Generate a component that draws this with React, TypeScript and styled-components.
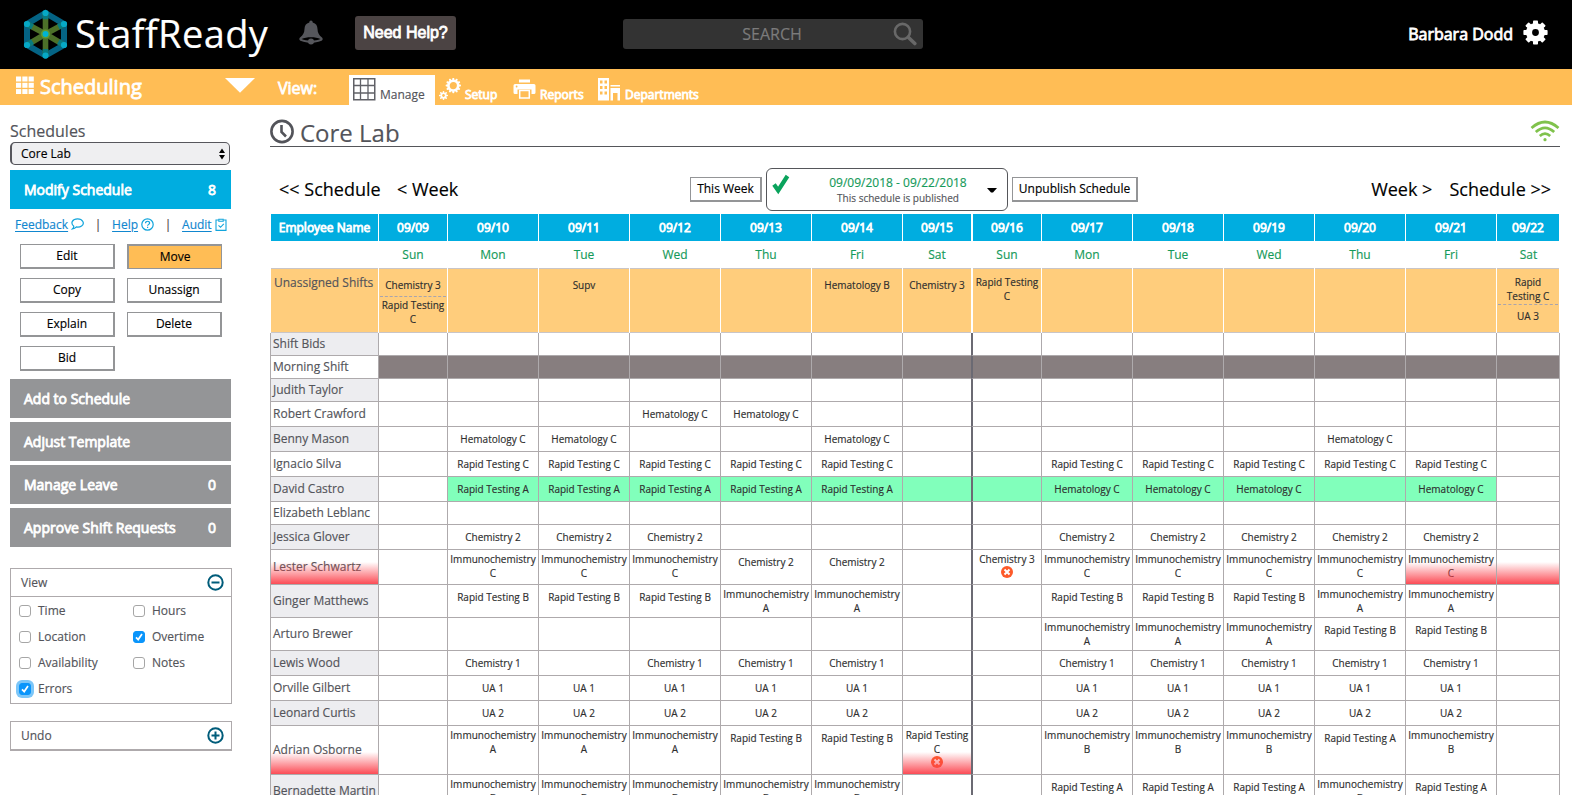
import React from 'react';
import styled, { createGlobalStyle, css } from 'styled-components';

const color = {
  orange: '#ffbd55',
  blue: '#00ade0',
  grey: '#949597',
  ink: '#53545a',
  line: '#aeaaac',
  green: '#159a5a',
};

const GlobalStyle = createGlobalStyle`
  * { box-sizing: border-box; }
  html, body { margin: 0; height: 795px; overflow: hidden; background: #fff; }
  body {
    font-family: 'Open Sans', sans-serif;
    font-size: 12px;
    color: ${color.ink};
    -webkit-text-stroke: 0.15px;
  }
  svg { display: block; flex: none; }
`;

const heavy = css`
  -webkit-text-stroke: 0.8px currentColor;
`;

/* ---------- Page frame ---------- */

const Page = styled.div`
  width: 1572px;
  height: 795px;
  overflow: hidden;
  display: flex;
  flex-direction: column;
`;

const TopBar = styled.header`
  flex: none;
  height: 69px;
  background: #000;
  display: flex;
  align-items: flex-start;
  color: #fff;
`;

const Logo = styled.div`
  display: flex;
  width: 277px;
  margin: 7px 0 0 22px;
  height: 54px;
`;

const LogoText = styled.span`
  margin-left: 5px;
  font-size: 38px;
  line-height: 53px;
  letter-spacing: 0.4px;
`;

const BellBox = styled.div`
  width: 56px;
  margin-top: 20px;
`;

const HelpButton = styled.div`
  ${heavy}
  width: 101px;
  height: 34px;
  margin-top: 16px;
  border-radius: 3px;
  background: #4b4343;
  font: 16px/33px 'Liberation Sans', sans-serif;
  text-align: center;
`;

const SearchBox = styled.div`
  width: 300px;
  height: 30px;
  margin: 19px 0 0 167px;
  padding: 3px 5px 0 28px;
  border-radius: 3px;
  background: #333;
  color: #7b7b7b;
  display: flex;
`;

const SearchLabel = styled.span`
  flex: 1;
  text-align: center;
  font-size: 16px;
  line-height: 24px;
`;

const Account = styled.div`
  ${heavy}
  margin: 20px 24px 0 auto;
  display: flex;
  gap: 10px;
  font-size: 16px;
  line-height: 28px;
`;

const NavBar = styled.nav`
  flex: none;
  height: 36px;
  background: ${color.orange};
  color: #fff;
  display: flex;
`;

const ModuleName = styled.div`
  ${heavy}
  width: 210px;
  padding: 7px 0 0 16px;
  display: flex;
  gap: 6px;
  font-size: 20px;
  line-height: 22px;
`;

const ModuleArrow = styled.div`
  width: 67px;
  padding: 9px 0 0 15px;
`;

const ViewLabel = styled.div`
  ${heavy}
  width: 72px;
  padding-left: 1px;
  font-size: 16px;
  line-height: 38px;
`;

const Tab = styled.div<{ $active?: boolean; $width: number }>`
  width: ${p => p.$width}px;
  height: 30px;
  margin-top: 6px;
  padding: 3px 0 0 4px;
  display: flex;
  gap: 4px;
  line-height: 33px;
  ${p => (p.$active ? css`background: #fff; color: ${color.ink};` : heavy)}
`;

const Body = styled.div`
  display: flex;
  align-items: flex-start;
`;

/* ---------- Sidebar ---------- */

const Sidebar = styled.aside`
  flex: none;
  width: 270px;
  padding: 15px 0 0 10px;
`;

const FieldLabel = styled.div`
  height: 22px;
  font-size: 16px;
  line-height: 22px;
`;

const Select = styled.div`
  width: 220px;
  height: 23px;
  padding: 0 3px 0 9px;
  border: 1px solid #56565c;
  border-left-width: 2px;
  border-radius: 5px;
  background: #efeff1;
  color: #000;
  line-height: 21px;
  display: flex;
  justify-content: space-between;
  align-items: center;
`;

const SectionButton = styled.div<{ $active?: boolean }>`
  ${heavy}
  width: 221px;
  height: 39px;
  margin-top: ${p => (p.$active ? 5 : 4)}px;
  padding: 0 15px 0 14px;
  background: ${p => (p.$active ? color.blue : color.grey)};
  color: #fff;
  font-size: 14px;
  line-height: 39px;
  display: flex;
  justify-content: space-between;
`;

const LinkRow = styled.div`
  display: flex;
  align-items: center;
  width: 221px;
  height: 18px;
  margin-top: 7px;
  padding-left: 5px;
  line-height: 18px;
`;

const Link = styled.a`
  display: flex;
  align-items: center;
  gap: 3px;
  color: #1187cf;
  span { text-decoration: underline; text-underline-offset: 2px; }
  svg { margin-top: -2px; }
`;

const Pipe = styled.span`
  width: 28px;
  text-align: center;
  color: #4b4643;
`;

const ButtonGrid = styled.div`
  display: grid;
  grid-template-columns: 95px 95px;
  grid-auto-rows: 25px;
  gap: 9px 12px;
  margin: 10px 0 8px 10px;
`;

const Button = styled.div<{ $pressed?: boolean }>`
  height: 25px;
  border: solid ${color.grey};
  border-width: ${p => (p.$pressed ? '2px 1px 1px 2px' : '1px 2px 2px 1px')};
  background: ${p => (p.$pressed ? color.orange : '#fff')};
  color: #000;
  line-height: 22px;
  text-align: center;
`;

const Panel = styled.section<{ $top: number }>`
  width: 222px;
  margin-top: ${p => p.$top}px;
  border: 1px solid ${color.line};
`;

const PanelHeader = styled.div`
  height: 28px;
  padding: 0 7px 0 10px;
  border-bottom: 1px solid ${color.line};
  line-height: 26px;
  display: flex;
  justify-content: space-between;
  align-items: center;
`;

const Options = styled.div`
  display: grid;
  grid-template-columns: 114px 1fr;
  grid-auto-rows: 26px;
  padding: 0 0 2px 8px;
`;

const Option = styled.label`
  display: flex;
  align-items: center;
  gap: 7px;
`;

const Check = styled.span<{ $on?: boolean; $focus?: boolean }>`
  width: 12px;
  height: 12px;
  margin-top: 2px;
  border: 1px solid ${p => (p.$on ? '#0a95fb' : '#a6a6a6')};
  border-radius: 3px;
  background: ${p => (p.$on ? '#0a95fb' : '#fff')};
  ${p => p.$focus && css`box-shadow: 0 0 0 3px #7cc6f8;`}
`;

/* ---------- Main area ---------- */

const Main = styled.main`
  width: 1290px;
`;

const TitleRow = styled.div`
  height: 42px;
  padding-top: 14px;
  border-bottom: 1px solid #55565a;
  display: flex;
  font-size: 24px;
  line-height: 28px;
`;

const Title = styled.span`
  flex: 1;
  padding-left: 6px;
`;

const WeekBar = styled.div`
  height: 67px;
  padding: 21px 9px 0;
  display: flex;
  color: #000;
`;

const WeekLink = styled.span<{ $width?: number }>`
  width: ${p => (p.$width ? p.$width + 'px' : 'auto')};
  font-size: 18px;
  line-height: 43px;
  white-space: nowrap;
`;

const NextLinks = styled.div`
  margin-left: auto;
  display: flex;
  gap: 17px;
`;

const WeekButton = styled(Button)<{ $width: number }>`
  width: ${p => p.$width}px;
  margin-top: 9px;
`;

const Period = styled.div`
  width: 242px;
  height: 43px;
  margin: 0 4px;
  padding: 5px 10px 0 5px;
  border: 1px solid #55565a;
  border-radius: 6px;
  display: flex;
`;

const PeriodText = styled.div`
  flex: 1;
  padding-left: 19px;
  color: ${color.ink};
  text-align: center;
  font-size: 10px;
  line-height: 14px;
`;

const PeriodDates = styled.div`
  color: ${color.green};
  font-size: 12px;
  line-height: 17px;
`;

/* ---------- Schedule grid ---------- */

const Table = styled.div`
  width: 1290px;
`;

const Row = styled.div<{ $height: number }>`
  display: grid;
  grid-template-columns: 108px 69px repeat(5, 91px) 69px 70px repeat(5, 91px) 64px;
  height: ${p => p.$height}px;
`;

const HeadCell = styled.div<{ $first?: boolean; $split?: boolean; $last?: boolean }>`
  ${heavy}
  border-left: ${p => (p.$split ? 2 : 1)}px solid #fff;
  border-right: ${p => (p.$last ? 1 : 0)}px solid #fff;
  background: ${color.blue};
  color: #fff;
  line-height: 27px;
  text-align: center;
`;

const DayCell = styled.div<{ $split?: boolean }>`
  padding-left: ${p => (p.$split ? 2 : 1)}px;
  color: ${color.green};
  line-height: 27px;
  text-align: center;
`;

const OpenCell = styled.div<{ $split?: boolean; $last?: boolean }>`
  margin-left: ${p => (p.$split ? 2 : 1)}px;
  margin-right: ${p => (p.$last ? 1 : 0)}px;
  padding: 5px 1px 0;
  border: solid #c9c5c7;
  border-width: 1px 0;
  background: #ffcd7c;
`;

const OpenName = styled.div`
  padding-left: 2px;
  line-height: 17px;
  white-space: nowrap;
`;

const overtime = css`
  position: relative;
  &::after {
    content: '';
    position: absolute;
    inset: auto 0 0 0;
    height: 22px;
    background: linear-gradient(rgba(251, 66, 76, 0), rgba(251, 66, 76, 0.95));
  }
`;

const Cell = styled.div<{ $split?: boolean; $last?: boolean; $fill?: string; $ot?: boolean }>`
  padding: 1px 1px 0;
  border-left: ${p => (p.$split ? '2px solid #6b6a73' : `1px solid ${color.line}`)};
  border-right: ${p => (p.$last ? 1 : 0)}px solid ${color.line};
  border-bottom: 1px solid ${color.line};
  background: ${p => p.$fill ?? '#fff'};
  background-clip: padding-box;
  ${p => p.$ot && overtime}
`;

const NameCell = styled.div<{ $shade: boolean; $ot?: boolean }>`
  padding: 0 0 1px 2px;
  border: solid ${color.line};
  border-width: 0 0 1px 1px;
  background: ${p => (p.$shade ? '#ededf0' : '#fff')};
  display: flex;
  align-items: center;
  line-height: 16px;
  white-space: nowrap;
  ${p => p.$ot && overtime}
`;

const Shift = styled.div<{ $next?: boolean }>`
  min-height: 22px;
  padding: 1px 0;
  color: #2e2e2e;
  font-size: 10px;
  line-height: 14px;
  text-align: center;
  display: flex;
  flex-direction: column;
  align-items: center;
  justify-content: center;
  ${p => p.$next && css`border-top: 1px dashed #a8a4ae; min-height: 23px;`}
`;

/* ---------- Icons ---------- */

const LogoMark = () => {
  const pts: [number, number][] = [[23.5, 6], [42, 17], [42, 38], [23.5, 48.5], [5, 38], [5, 17]];
  return (
    <svg width="48" height="54" viewBox="0 0 48 54">
      <polygon points={pts.map(p => p.join(',')).join(' ')} fill="none" stroke="#046384" strokeWidth="6" />
      {pts.map(([x, y], i) => (
        <line key={i} x1="23.5" y1="27" x2={x} y2={y} stroke="#4c7029" strokeWidth="5.6" />
      ))}
      {pts.map(([x, y], i) => (
        <line key={i} x1={x + (23.5 - x) * 0.3} y1={y + (27 - y) * 0.3} x2={x} y2={y} stroke="#087a80" strokeWidth="5.6" />
      ))}
      {pts.map(([x, y], i) => <circle key={i} cx={x} cy={y} r="3.1" fill="#06a9c6" />)}
      <circle cx="23.5" cy="27" r="4.6" fill="#5f9a2e" />
      <circle cx="23.5" cy="27" r="3" fill="#00b4d2" />
    </svg>
  );
};

const BellIcon = () => (
  <svg width="24" height="25" viewBox="0 0 24 25">
    <path d="M12 0.5c-1 0-1.7.8-1.7 1.9C7 3.2 5.6 5.6 5.5 9c-.1 4-1.6 6.200-4.200 8.200C-.4 18.600.3 20.300 2.200 21c6 2.400 13.600 2.400 19.600 0 1.900-.7 2.600-2.400.9-3.800-2.600-2-4.100-4.200-4.200-8.200-.1-3.400-1.500-5.800-4.800-6.600C13.700 1.300 13 .5 12 .5z" fill="#56575c" />
    <path d="M2.500 18.900c5-2.200 14-2.200 19 0-5 2.100-14 2.100-19 0z" fill="#000" />
    <circle cx="12" cy="21.500" r="3" fill="#56575c" />
  </svg>
);

const SearchIcon = () => (
  <svg width="25" height="24" viewBox="0 0 25 24" fill="none" stroke="#686868">
    <circle cx="9.500" cy="9.500" r="7.600" strokeWidth="2.600" />
    <path d="M15.500 15.500l6.300 6" strokeWidth="3.600" strokeLinecap="round" />
  </svg>
);

const Gear = ({ cx, cy, r, hole, teeth, fill = '#fff', depth, tooth }: {
  cx: number; cy: number; r: number; hole: number; teeth: number; fill?: string; depth: number; tooth: number;
}) => (
  <g>
    {Array.from({ length: teeth }, (_, i) => (
      <rect key={i} x={cx - tooth / 2} y={cy - r - depth} width={tooth} height={depth + 1.5} rx="0.8" fill={fill}
        transform={`rotate(${(360 / teeth) * i} ${cx} ${cy})`} />
    ))}
    <circle cx={cx} cy={cy} r={(r + hole) / 2} fill="none" stroke={fill} strokeWidth={r - hole} />
  </g>
);

const AppsIcon = () => (
  <svg width="18" height="18" viewBox="0 0 18 18" fill="#fff">
    {[0, 6.3, 12.6].map(y => [0, 6.3, 12.6].map(x => (
      <rect key={`${x}-${y}`} x={x} y={y + 0.5} width="5.2" height="5" />
    )))}
  </svg>
);

const TableIcon = () => (
  <svg width="23" height="23" viewBox="0 0 23 23" fill="none" stroke="#606167">
    <rect x="0.75" y="0.75" width="21" height="21" strokeWidth="1.5" />
    <path d="M7.500 1v21M15 1v21M1 7.500h21M1 15h21" strokeWidth="1.300" />
  </svg>
);

const SetupIcon = () => (
  <svg width="22" height="23" viewBox="0 0 22 23">
    <Gear cx={14.3} cy={7.6} r={6.2} hole={3.6} teeth={12} depth={1.5} tooth={2} />
    <Gear cx={4.5} cy={17.5} r={3.1} hole={1.4} teeth={8} depth={1.5} tooth={1.6} />
  </svg>
);

const PrinterIcon = () => (
  <svg width="23" height="23" viewBox="0 0 23 23" fill="#fff">
    <rect x="6" y="1.500" width="11" height="3" />
    <path d="M2 6h19a1.500 1.500 0 0 1 1.500 1.500v7a1.500 1.500 0 0 1-1.500 1.500h-2.500V11.500h-14V16H2A1.500 1.500 0 0 1 .5 14.500V7.500A1.500 1.500 0 0 1 2 6z" />
    <circle cx="3.600" cy="8.500" r="0.900" fill={color.orange} />
    <path d="M6.700 12.500h9.600v7.600h-9.600z" fill={color.orange} stroke="#fff" strokeWidth="1.500" />
  </svg>
);

const BuildingIcon = () => (
  <svg width="23" height="23" viewBox="0 0 23 23" fill="#fff">
    <path d="M0 0h11v22.500H0z" />
    <path d="M2 2.500h2.500v3H2zM6.500 2.500H9v3H6.500zM2 8h2.500v3H2zM6.500 8H9v3H6.500zM2 13.500h2.500v3H2zM6.500 13.500H9v3H6.500z" fill={color.orange} />
    <path d="M12.500 7h9.500v1.600h-9.500zM12.500 10H22v12.500h-2.500V15H15v7.500h-2.500z" />
  </svg>
);

const ClockIcon = () => (
  <svg width="24" height="25" viewBox="0 0 24 25" fill="none" stroke={color.ink}>
    <circle cx="12" cy="12.500" r="10.600" strokeWidth="2.600" />
    <path d="M11.500 6v7l4.500 4.500" strokeWidth="2.600" />
  </svg>
);

const WifiIcon = () => (
  <svg width="30" height="23" viewBox="0 0 30 23" fill="none" stroke="#80c24c" strokeWidth="2.700">
    <path d="M1.500 9q13.500-12 27 0" />
    <path d="M5.800 13q9.200-8.400 18.400 0" />
    <path d="M9.800 16.900q5.200-4.600 10.400 0" />
    <circle cx="15" cy="20.700" r="1.600" fill="#80c24c" stroke="none" />
  </svg>
);

const ArrowPair = () => (
  <svg width="8" height="12" viewBox="0 0 8 12">
    <path d="M4 0.500L7 5H1zM4 11.500L7 7H1z" fill="#000" />
  </svg>
);

const BubbleIcon = () => (
  <svg width="13" height="12" viewBox="0 0 13 12" fill="none" stroke="#12a5dc" strokeWidth="1.200">
    <path d="M2.800 8.200C-1 5 1.500.9 6.600.9s7.500 4.600 4 7c-1.600 1.100-3.400 1.300-5.200 1-1 1.200-2.200 1.900-4 2.100.9-.9 1.400-1.800 1.400-2.800z" />
  </svg>
);

const QuestionIcon = () => (
  <svg width="13" height="13" viewBox="0 0 13 13" fill="none" stroke="#12a5dc" strokeWidth="1.200">
    <circle cx="6.500" cy="6.500" r="5.700" />
    <path d="M4.500 5.200c0-2.700 4.300-2.500 4.100-.1-.1 1.300-2 1.300-2 2.700M6.600 8.700v1.300" />
  </svg>
);

const ClipboardIcon = () => (
  <svg width="12" height="13" viewBox="0 0 12 13" fill="none" stroke="#12a5dc" strokeWidth="1.100">
    <path d="M3.500 2H1v10.400h10V2H8.500" />
    <path d="M3.800 1.200h4.400v2H3.800zM3.500 7.300l2 2 3.300-3.500" />
  </svg>
);

const ToggleIcon = ({ plus }: { plus?: boolean }) => (
  <svg width="17" height="17" viewBox="0 0 17 17" fill="none" stroke="#005c7a" strokeWidth="2">
    <circle cx="8.500" cy="8.500" r="7.200" />
    <path d={plus ? 'M4.500 8.500h8M8.500 4.500v8' : 'M4.500 8.500h8'} />
  </svg>
);

const ErrorIcon = () => (
  <svg width="12" height="12" viewBox="0 0 12 12">
    <circle cx="6" cy="6" r="6" fill="#fd5a2a" />
    <path d="M3.500 3.500l5 5M8.500 3.500l-5 5" stroke="#fff" strokeWidth="2" />
  </svg>
);

const PublishedIcon = () => (
  <svg width="18" height="21" viewBox="0 0 18 21">
    <path d="M2 10.500l4.200 6L15.500 2" fill="none" stroke="#0aa35c" strokeWidth="4.200" />
  </svg>
);

/* ---------- Data ---------- */

const dates = ['09/09', '09/10', '09/11', '09/12', '09/13', '09/14', '09/15', '09/16', '09/17', '09/18', '09/19', '09/20', '09/21', '09/22'];
const days = ['Sun', 'Mon', 'Tue', 'Wed', 'Thu', 'Fri', 'Sat'];
const SPLIT = 7;
const LAST = 13;

const openShifts: Record<number, string[]> = {
  0: ['Chemistry 3', 'Rapid Testing C'],
  2: ['Supv'],
  5: ['Hematology B'],
  6: ['Chemistry 3'],
  7: ['Rapid Testing C'],
  13: ['Rapid Testing C', 'UA 3'],
};

const shiftNames: Record<string, string> = {
  HC: 'Hematology C', RA: 'Rapid Testing A', RB: 'Rapid Testing B', RC: 'Rapid Testing C',
  C1: 'Chemistry 1', C2: 'Chemistry 2', C3: 'Chemistry 3', U1: 'UA 1', U2: 'UA 2',
  IA: 'Immunochemistry A', IB: 'Immunochemistry B', IC: 'Immunochemistry C',
};

interface Employee {
  name: string;
  height: number;
  shifts?: string;
  fill?: string;
  from?: number;
  to?: number;
  nameOt?: boolean;
  ot?: number[];
  errors?: number[];
}

const employees: Employee[] = [
  { name: 'Shift Bids', height: 23 },
  { name: 'Morning Shift', height: 23, fill: '#877e7f', from: 0, to: 13 },
  { name: 'Judith Taylor', height: 23 },
  { name: 'Robert Crawford', height: 25, shifts: '- - - HC HC' },
  { name: 'Benny Mason', height: 25, shifts: '- HC HC - - HC - - - - - HC' },
  { name: 'Ignacio Silva', height: 25, shifts: '- RC RC RC RC RC - - RC RC RC RC RC' },
  { name: 'David Castro', height: 25, shifts: '- RA RA RA RA RA - - HC HC HC - HC', fill: '#81ffbb', from: 1, to: 12 },
  { name: 'Elizabeth Leblanc', height: 23 },
  { name: 'Jessica Glover', height: 25, shifts: '- C2 C2 C2 - - - - C2 C2 C2 C2 C2' },
  { name: 'Lester Schwartz', height: 35, shifts: '- IC IC IC C2 C2 - C3 IC IC IC IC IC', nameOt: true, ot: [12, 13], errors: [7] },
  { name: 'Ginger Matthews', height: 33, shifts: '- RB RB RB IA IA - - RB RB RB IA IA' },
  { name: 'Arturo Brewer', height: 33, shifts: '- - - - - - - - IA IA IA RB RB' },
  { name: 'Lewis Wood', height: 25, shifts: '- C1 - C1 C1 C1 - - C1 C1 C1 C1 C1' },
  { name: 'Orville Gilbert', height: 25, shifts: '- U1 U1 U1 U1 U1 - - U1 U1 U1 U1 U1' },
  { name: 'Leonard Curtis', height: 25, shifts: '- U2 U2 U2 U2 U2 - - U2 U2 U2 U2 U2' },
  { name: 'Adrian Osborne', height: 49, shifts: '- IA IA IA RB RB RC - IB IB IB RA IB', nameOt: true, ot: [6], errors: [6] },
  { name: 'Bernadette Martin', height: 33, shifts: '- IB IB IB IB IB - - RA RA RA IB RA' },
];

const viewOptions = ['Time', 'Hours', 'Location', 'Overtime', 'Availability', 'Notes', 'Errors'];

function EmployeeRow({ e, index }: { e: Employee; index: number }) {
  const codes = (e.shifts ?? '').split(' ');
  return (
    <Row $height={e.height}>
      <NameCell $shade={index % 2 === 0} $ot={e.nameOt}>{e.name}</NameCell>
      {dates.map((d, i) => {
        const filled = e.fill && i >= (e.from ?? 0) && i <= (e.to ?? 0);
        const label = shiftNames[codes[i]];
        return (
          <Cell key={d} $split={i === SPLIT} $last={i === LAST} $fill={filled ? e.fill : undefined} $ot={e.ot?.includes(i)}>
            {label && <Shift>{label}{e.errors?.includes(i) && <ErrorIcon />}</Shift>}
          </Cell>
        );
      })}
    </Row>
  );
}

export default function App() {
  return (
    <Page>
      <GlobalStyle />
      <TopBar>
        <Logo><LogoMark /><LogoText>StaffReady</LogoText></Logo>
        <BellBox><BellIcon /></BellBox>
        <HelpButton>Need Help?</HelpButton>
        <SearchBox><SearchLabel>SEARCH</SearchLabel><SearchIcon /></SearchBox>
        <Account>
          Barbara Dodd
          <svg width="25" height="25" viewBox="0 0 25 25">
            <Gear cx={12.5} cy={12.5} r={9.5} hole={3.4} teeth={8} depth={2.6} tooth={5} />
          </svg>
        </Account>
      </TopBar>
      <NavBar>
        <ModuleName><AppsIcon />Scheduling</ModuleName>
        <ModuleArrow>
          <svg width="30" height="15" viewBox="0 0 30 15"><path d="M0 0h30L15 14.700z" fill="#fff" /></svg>
        </ModuleArrow>
        <ViewLabel>View:</ViewLabel>
        <Tab $active $width={86}><TableIcon />Manage</Tab>
        <Tab $width={74}><SetupIcon />Setup</Tab>
        <Tab $width={85}><PrinterIcon />Reports</Tab>
        <Tab $width={120}><BuildingIcon />Departments</Tab>
      </NavBar>
      <Body>
        <Sidebar>
          <FieldLabel>Schedules</FieldLabel>
          <Select>Core Lab<ArrowPair /></Select>
          <SectionButton $active><span>Modify Schedule</span><span>8</span></SectionButton>
          <LinkRow>
            <Link><span>Feedback</span><BubbleIcon /></Link>
            <Pipe>|</Pipe>
            <Link><span>Help</span><QuestionIcon /></Link>
            <Pipe>|</Pipe>
            <Link><span>Audit</span><ClipboardIcon /></Link>
          </LinkRow>
          <ButtonGrid>
            <Button>Edit</Button>
            <Button $pressed>Move</Button>
            <Button>Copy</Button>
            <Button>Unassign</Button>
            <Button>Explain</Button>
            <Button>Delete</Button>
            <Button>Bid</Button>
          </ButtonGrid>
          <SectionButton>Add to Schedule</SectionButton>
          <SectionButton>Adjust Template</SectionButton>
          <SectionButton><span>Manage Leave</span><span>0</span></SectionButton>
          <SectionButton><span>Approve Shift Requests</span><span>0</span></SectionButton>
          <Panel $top={21}>
            <PanelHeader>View<ToggleIcon /></PanelHeader>
            <Options>
              {viewOptions.map(o => {
                const on = o === 'Overtime' || o === 'Errors';
                return (
                  <Option key={o}>
                    <Check $on={on} $focus={o === 'Errors'}>
                      {on && (
                        <svg width="10" height="10" viewBox="0 0 10 10">
                          <path d="M2 5.300l2.200 2.300L8 2" fill="none" stroke="#fff" strokeWidth="1.700" />
                        </svg>
                      )}
                    </Check>
                    {o}
                  </Option>
                );
              })}
            </Options>
          </Panel>
          <Panel $top={17}>
            <PanelHeader>Undo<ToggleIcon plus /></PanelHeader>
          </Panel>
        </Sidebar>
        <Main>
          <TitleRow><ClockIcon /><Title>Core Lab</Title><WifiIcon /></TitleRow>
          <WeekBar>
            <WeekLink $width={118}>&lt;&lt; Schedule</WeekLink>
            <WeekLink $width={293}>&lt; Week</WeekLink>
            <WeekButton $width={72}>This Week</WeekButton>
            <Period>
              <PublishedIcon />
              <PeriodText>
                <PeriodDates>09/09/2018 - 09/22/2018</PeriodDates>
                This schedule is published
              </PeriodText>
              <svg width="10" height="34" viewBox="0 0 10 34"><path d="M0 14h10l-4 4.500h-2z" fill="#000" /></svg>
            </Period>
            <WeekButton $width={126}>Unpublish Schedule</WeekButton>
            <NextLinks>
              <WeekLink>Week &gt;</WeekLink>
              <WeekLink>Schedule &gt;&gt;</WeekLink>
            </NextLinks>
          </WeekBar>
          <Table>
            <Row $height={27}>
              <HeadCell>Employee Name</HeadCell>
              {dates.map((d, i) => <HeadCell key={d} $split={i === SPLIT} $last={i === LAST}>{d}</HeadCell>)}
            </Row>
            <Row $height={27}>
              <DayCell />
              {dates.map((d, i) => <DayCell key={d} $split={i === SPLIT}>{days[i % 7]}</DayCell>)}
            </Row>
            <Row $height={65}>
              <OpenCell><OpenName>Unassigned Shifts</OpenName></OpenCell>
              {dates.map((d, i) => (
                <OpenCell key={d} $split={i === SPLIT} $last={i === LAST}>
                  {(openShifts[i] ?? []).map((s, n) => <Shift key={s} $next={n > 0}>{s}</Shift>)}
                </OpenCell>
              ))}
            </Row>
            {employees.map((e, i) => <EmployeeRow key={e.name} e={e} index={i} />)}
          </Table>
        </Main>
      </Body>
    </Page>
  );
}
